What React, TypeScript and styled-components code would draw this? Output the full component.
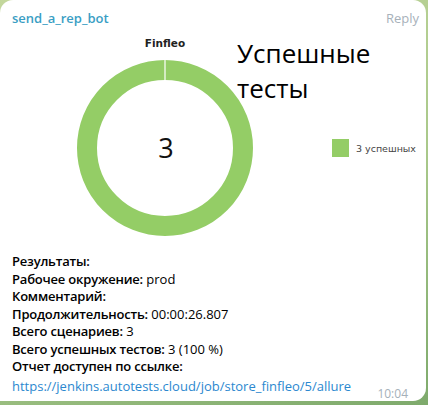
import React from "react";
import styled, { createGlobalStyle } from "styled-components";

const Global = createGlobalStyle`
  html, body { margin: 0; padding: 0; }
  body {
    width: 428px;
    height: 405px;
    overflow: hidden;
    background: linear-gradient(160deg, #c3d79c 0%, #a9c88a 55%, #7eaa6c 100%);
    font-family: "Open Sans", "Noto Sans", sans-serif;
  }
`;

const Bubble = styled.div`
  width: 426px;
  height: 401px;
  background: #ffffff;
  border-radius: 13px 13px 13px 0;
  display: flex;
  flex-direction: column;
  box-sizing: border-box;
`;

const Header = styled.div`
  display: flex;
  justify-content: space-between;
  align-items: baseline;
  padding: 8px 7px 0 12px;
  height: 28px;
  box-sizing: border-box;
`;

const Author = styled.span`
  color: #3a9ec4;
  font-size: 13px;
  font-weight: 600;
  line-height: 20px;
`;

const ReplyLink = styled.span`
  color: #a7b1ba;
  font-size: 13px;
  line-height: 20px;
`;

const Chart = styled.svg`
  display: block;
  width: 426px;
  height: 225px;
  flex: none;
`;

const Lines = styled.div`
  padding: 0 12px;
  font-size: 13px;
  line-height: 17.5px;
  color: #000000;
`;

const Line = styled.div`
  white-space: nowrap;
`;

const Label = styled.span`
  font-weight: 600;
  letter-spacing: -0.2px;
`;

const LastRow = styled.div`
  display: flex;
  justify-content: space-between;
  align-items: flex-end;
  padding-right: 6px;
  margin-top: 2px;
`;

const Url = styled.a`
  color: #2b88cf;
  text-decoration: none;
`;

const Time = styled.span`
  color: #a5b0b9;
  font-size: 12px;
  line-height: 14px;
  position: relative;
  top: 6px;
`;

const GREEN = "#94cd66";

export default function App() {
  const cx = 165;
  const cy = 120; // 148 - 28
  return (
    <>
      <Global />
      <Bubble>
        <Header>
          <Author>send_a_rep_bot</Author>
          <ReplyLink>Reply</ReplyLink>
        </Header>
        <Chart viewBox="0 0 426 225">
          <text
            x={cx}
            y={19}
            textAnchor="middle"
            fontFamily="'DejaVu Sans', Verdana, sans-serif"
            fontWeight="bold"
            fontSize="10.5"
            fill="#222"
          >
            Finfleo
          </text>
          <circle cx={cx} cy={cy} r={78} fill="none" stroke={GREEN} strokeWidth={20} />
          <line x1={cx} y1={cy - 89} x2={cx} y2={cy - 67} stroke="#ffffff" strokeWidth={1.2} />
          <text
            x={cx + 1}
            y={130}
            textAnchor="middle"
            fontFamily="'Open Sans', sans-serif"
            fontSize="27"
            fill="#111"
          >
            3
          </text>
          <text x={237} y={35} fontFamily="'Open Sans', sans-serif" fontSize="26" fill="#000">
            Успешные
          </text>
          <text x={237} y={70} fontFamily="'Open Sans', sans-serif" fontSize="26" fill="#000">
            тесты
          </text>
          <rect x={332} y={111} width={17} height={18} fill={GREEN} />
          <text x={356} y={124} fontFamily="'DejaVu Sans', Verdana, sans-serif" fontSize="9.5" fill="#444">
            3 успешных
          </text>
        </Chart>
        <Lines>
          <Line>
            <Label>Результаты:</Label>
          </Line>
          <Line>
            <Label>Рабочее окружение:</Label> prod
          </Line>
          <Line>
            <Label>Комментарий:</Label>
          </Line>
          <Line>
            <Label>Продолжительность:</Label> 00:00:26.807
          </Line>
          <Line>
            <Label>Всего сценариев:</Label> 3
          </Line>
          <Line>
            <Label>Всего успешных тестов:</Label> 3 (100 %)
          </Line>
          <Line>
            <Label>Отчет доступен по ссылке:</Label>
          </Line>
          <LastRow>
            <Url href="#">https://jenkins.autotests.cloud/job/store_finfleo/5/allure</Url>
            <Time>10:04</Time>
          </LastRow>
        </Lines>
      </Bubble>
    </>
  );
}
